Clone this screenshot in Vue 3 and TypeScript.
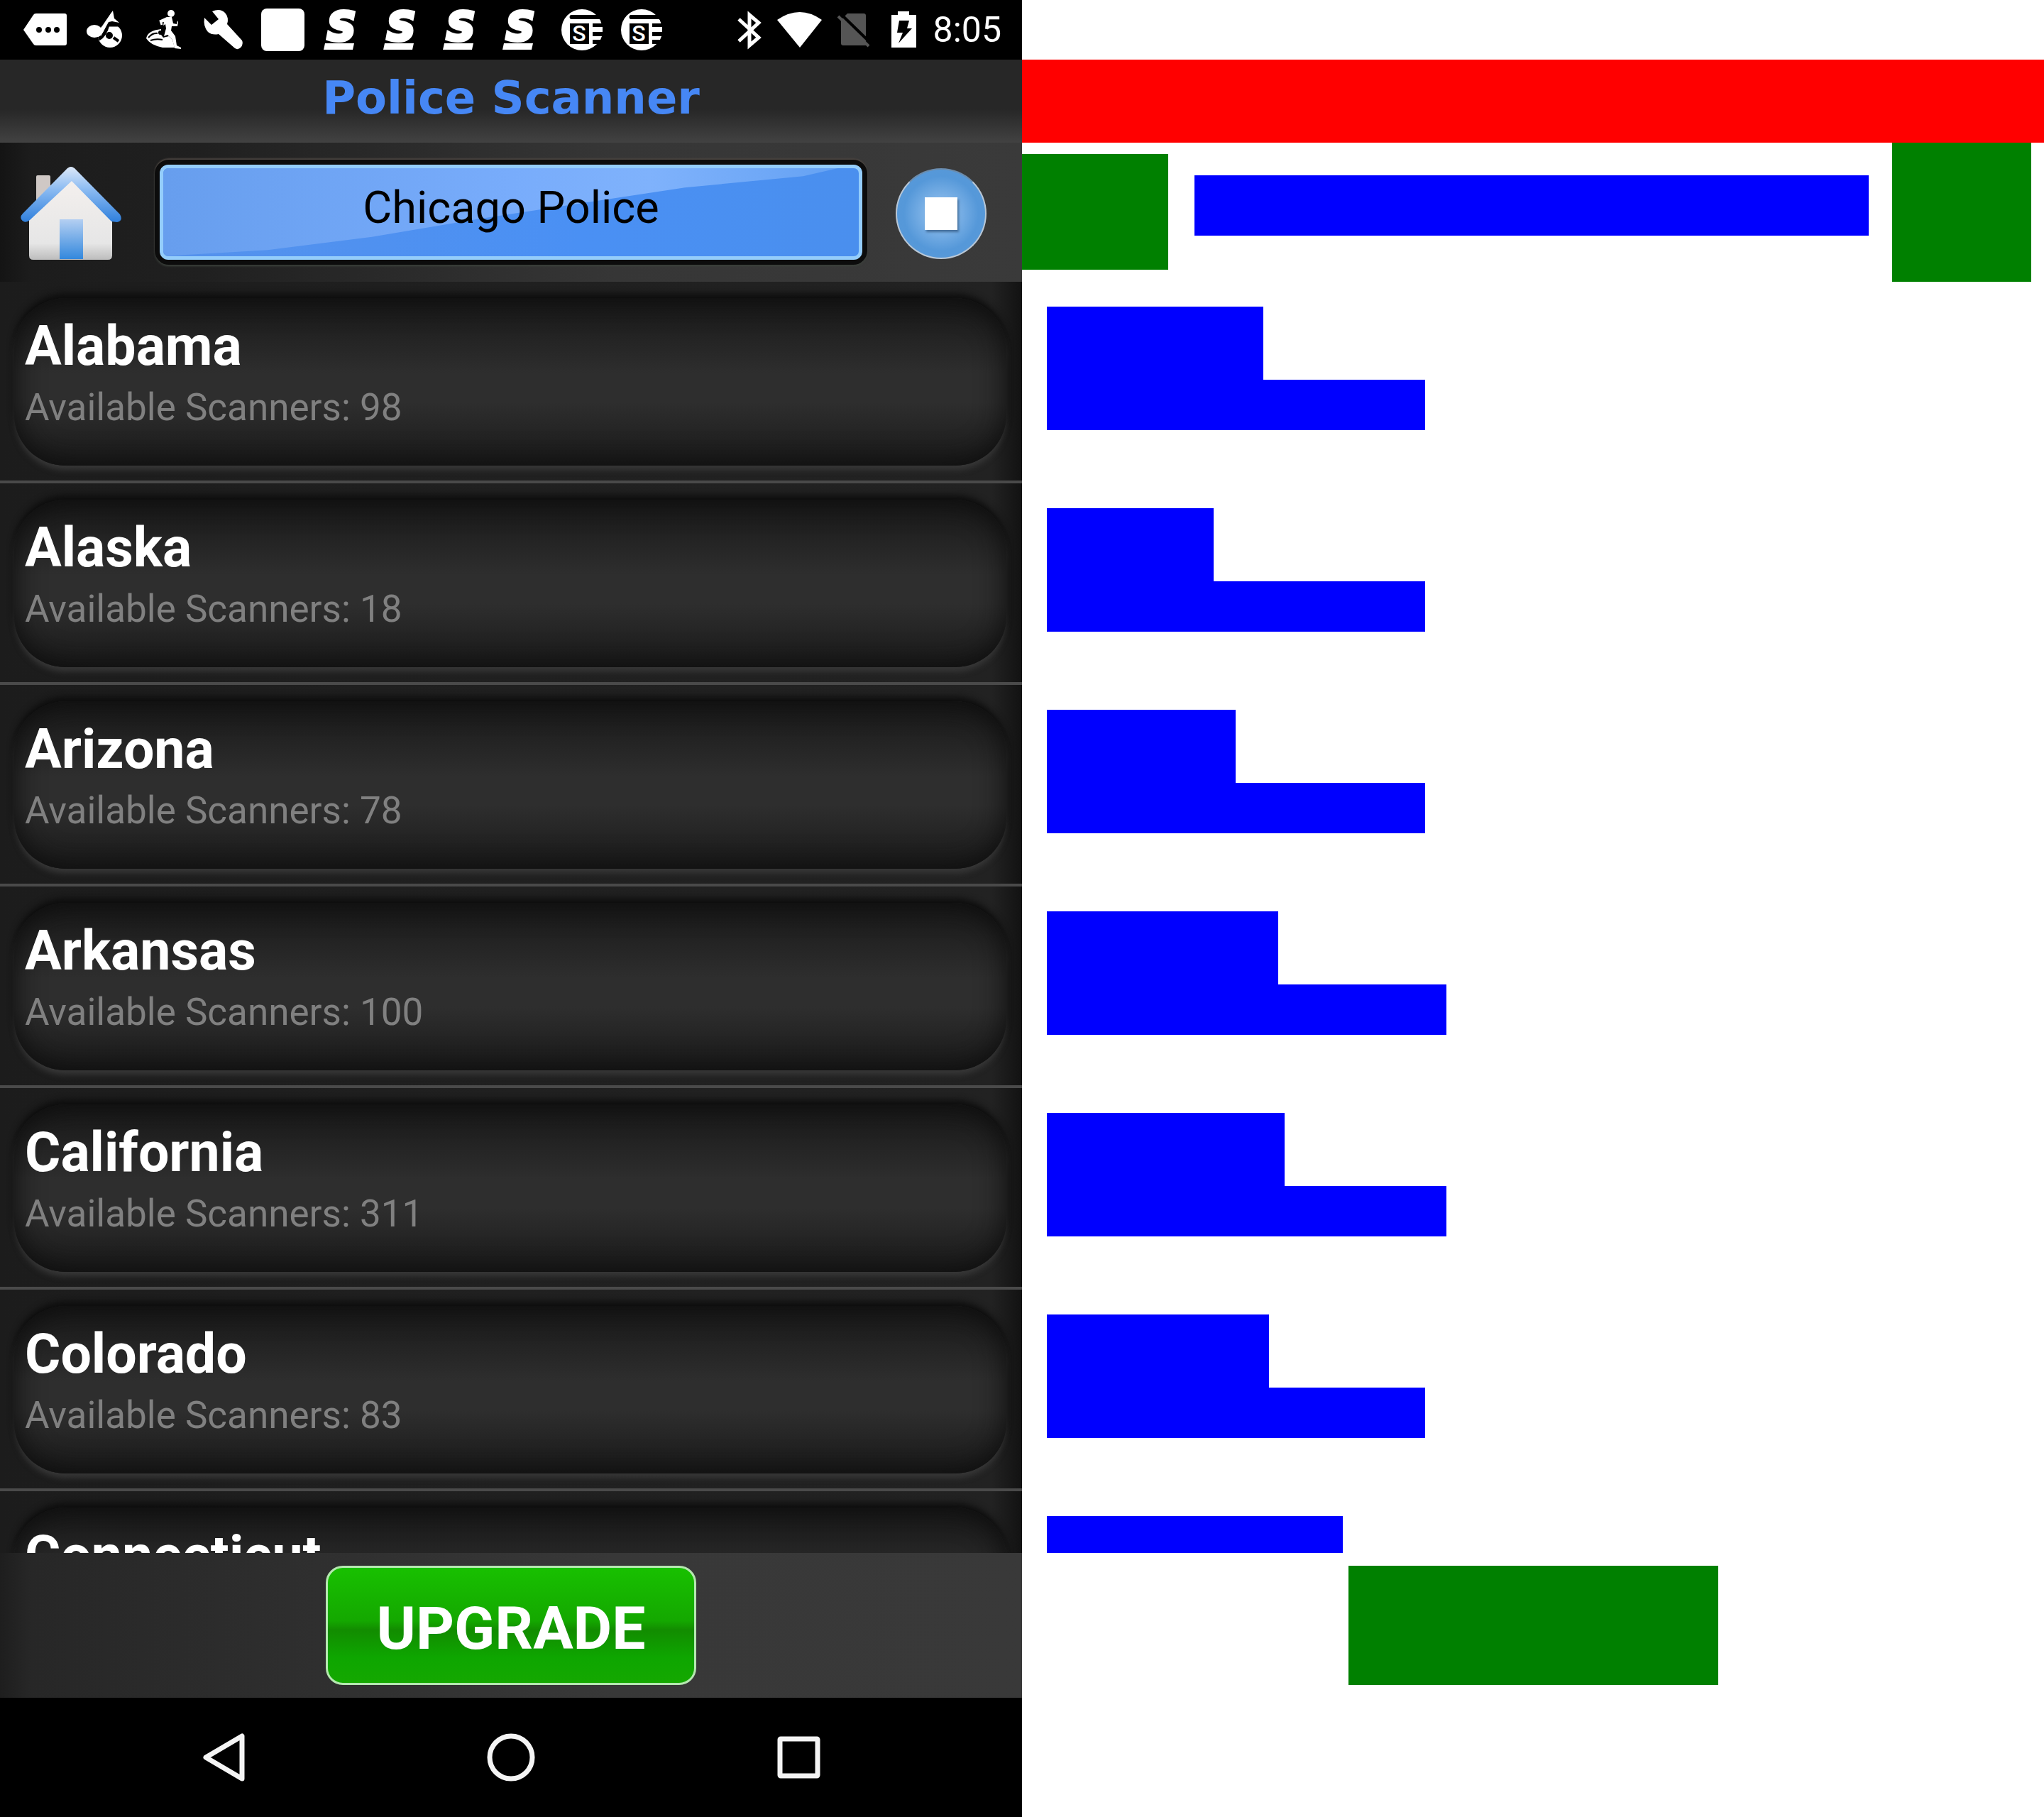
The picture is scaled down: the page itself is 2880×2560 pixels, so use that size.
<script setup lang="ts">
interface Region {
  name: string
  scanners: number
  nameWidth: number
  detailWidth: number
}

const regions: Region[] = [
  { name: 'Alabama', scanners: 98, nameWidth: 305, detailWidth: 533 },
  { name: 'Alaska', scanners: 18, nameWidth: 235, detailWidth: 533 },
  { name: 'Arizona', scanners: 78, nameWidth: 266, detailWidth: 533 },
  { name: 'Arkansas', scanners: 100, nameWidth: 326, detailWidth: 563 },
  { name: 'California', scanners: 311, nameWidth: 335, detailWidth: 563 },
  { name: 'Colorado', scanners: 83, nameWidth: 313, detailWidth: 533 },
  { name: 'Connecticut', scanners: 0, nameWidth: 417, detailWidth: 533 },
]

const sIcons = [1, 2, 3, 4]
const sfIcons = [1, 2]
</script>

<template>
  <div class="page">
    <main class="phone">
      <div class="status">
        <div class="notices">
          <svg viewBox="0 0 84 84">
            <path fill="#fff" d="M11 42 25 21Q26 19 29 19H69Q72 19 72 22V61Q72 64 69 64H29Q26 64 25 62Z" />
            <g fill="#000"><circle cx="33" cy="42" r="4" /><circle cx="46" cy="42" r="4" /><circle cx="58" cy="42" r="4" /></g>
          </svg>
          <svg viewBox="0 0 84 84">
            <circle cx="49" cy="50" r="17" fill="#fff" />
            <path d="M33 55Q42 50 46 35L64 35" fill="none" stroke="#000" stroke-width="5" />
            <ellipse cx="27" cy="44" rx="11" ry="9" fill="#fff" />
            <path d="M33 44 50 19 53 15 55 26 62 32 52 30 47 31 36 51Z" fill="#fff" />
            <circle cx="48" cy="50" r="5" fill="#000" />
            <path d="M54 53 61 58" stroke="#000" stroke-width="4" />
          </svg>
          <svg viewBox="0 0 84 84">
            <circle cx="51" cy="19" r="5" fill="#fff" />
            <path d="M45 24 52 24 54 33 59 34 60 29 61 31 60 37 52 37 51 43 57 51 59 64 65 67 65 69 56 68 53 56 46 49 41 51 44 40 43 34 40 36 41 31 37 32 34 29Z" fill="#fff" />
            <path d="M36 29 38 35" stroke="#fff" stroke-width="3" />
            <path d="M37 41Q18 43 16 54 21 63 39 67H56L53 56 48 51 40 53 37 49Z" fill="#fff" />
            <circle cx="36" cy="46" r="3" fill="#000" />
            <path d="M19 53Q25 46 32 47M22 57Q30 54 39 56" stroke="#000" stroke-width="2" fill="none" />
          </svg>
          <svg viewBox="0 0 84 84">
            <path d="M25 16Q36 11 43 18 49 25 46 34L67 57Q69 61 66 66 62 71 57 68L34 48Q25 50 19 45 12 37 14 25L24 35 34 27Z" fill="#fff" />
          </svg>
          <svg viewBox="0 0 84 84"><rect x="10" y="12" width="61" height="60" rx="8" fill="#fff" /></svg>
          <svg v-for="n in sIcons" :key="'s' + n" viewBox="0 0 84 84">
            <text x="19" y="56" class="s-glyph">S</text>
            <path d="M16 61H57L55 70H14Z" fill="#fff" />
          </svg>
          <svg v-for="n in sfIcons" :key="'f' + n" viewBox="0 0 84 84">
            <circle cx="42" cy="42" r="29" fill="#fff" />
            <path d="M26 21H64L70 27H26Q23 24 26 21ZM57 33H74V38H57ZM57 45H74V51H57ZM57 56H74L64 62H57ZM25 33H52V62H25Z" fill="#000" />
            <path d="M57 28H68V32H57ZM57 38H71V45H57ZM57 51H70L68 56H57Z" fill="#fff" />
            <text x="38" y="58" text-anchor="middle" class="sf-glyph">S</text>
          </svg>
        </div>
        <div class="system">
          <svg class="bt" viewBox="0 0 36 84">
            <path d="M2 27 30 53 17 64V21L30 32 2 58" fill="none" stroke="#fff" stroke-width="5" />
          </svg>
          <svg class="wifi" viewBox="0 0 64 84">
            <path d="M0 28Q32 6 63 28L32 67Z" fill="#fff" />
          </svg>
          <svg class="sim" viewBox="0 0 56 84">
            <path d="M12 22 15 19H38Q41 19 41 22V64H9Q6 64 6 61V28Z" fill="#555" />
            <path d="M2 23 45 65" stroke="#555" stroke-width="4" />
            <path d="M8 22 43 56" stroke="#000" stroke-width="4" />
          </svg>
          <svg class="battery" viewBox="0 0 40 84">
            <path d="M10 16H26V21H36V67H1V21H10Z" fill="#fff" />
            <path d="M12 29H26L23 40H30L11 61 17 46H9Z" fill="#000" />
          </svg>
          <time class="clock">8:05</time>
        </div>
      </div>

      <h1 class="title">Police Scanner</h1>

      <div class="toolbar">
        <button class="home" type="button" aria-label="Home">
          <svg viewBox="0 0 144 134">
            <defs>
              <linearGradient id="roof" x1="0" y1="0" x2="0" y2="1">
                <stop offset="0" stop-color="#dce8f8" /><stop offset=".4" stop-color="#8dbcf2" /><stop offset="1" stop-color="#2f7fdc" />
              </linearGradient>
              <linearGradient id="wall" x1="0" y1="0" x2="0" y2="1">
                <stop offset="0" stop-color="#f4f0ee" /><stop offset=".8" stop-color="#e6e6e6" /><stop offset="1" stop-color="#bdbdbd" />
              </linearGradient>
              <linearGradient id="door" x1="0" y1="0" x2="0" y2="1">
                <stop offset="0" stop-color="#b4cff2" /><stop offset="1" stop-color="#3388dd" />
              </linearGradient>
            </defs>
            <path d="M23 15Q23 13 25 13H41Q43 13 43 15V35L23 55Z" fill="#cfc8c5" />
            <path d="M72 16 130 72V126Q130 132 124 132H19Q13 132 13 126V72Z" fill="url(#wall)" />
            <path d="M67 3Q72-1 77 3L141 68Q146 77 137 79L129 78 73 21 14 76Q7 82 2 75 0 71 4 67Z" fill="url(#roof)" />
            <path d="M56 75H89V131H56Z" fill="url(#door)" />
          </svg>
        </button>
        <div class="playing"><span>Chicago Police</span></div>
        <button class="stop" type="button" aria-label="Stop"><span class="square"></span></button>
      </div>

      <ul class="list">
        <li v-for="region in regions" :key="region.name">
          <button class="region" type="button">
            <span class="name">{{ region.name }}</span>
            <span v-if="region.scanners" class="detail">Available Scanners: {{ region.scanners }}</span>
          </button>
        </li>
      </ul>

      <div class="promo"><button class="upgrade" type="button">UPGRADE</button></div>

      <nav class="keys">
        <button type="button" aria-label="Back">
          <svg viewBox="0 0 68 68"><path d="M9 34 60 4V64Z" /></svg>
        </button>
        <button type="button" aria-label="Home screen">
          <svg viewBox="0 0 68 68"><circle cx="34" cy="34" r="30" /></svg>
        </button>
        <button type="button" aria-label="Recent apps">
          <svg viewBox="0 0 68 68"><rect x="8" y="8" width="53" height="52" rx="1" /></svg>
        </button>
      </nav>
    </main>

    <section class="blocks" aria-label="Layout blocks">
      <div class="b-title"></div>
      <div class="b-toolbar">
        <div class="b-home"></div>
        <div class="b-playing"></div>
        <div class="b-stop"></div>
      </div>
      <div class="b-list">
        <div v-for="region in regions" :key="region.name" class="b-row">
          <div class="b-name" :style="{ width: region.nameWidth + 'px' }"></div>
          <div class="b-detail" :style="{ width: region.detailWidth + 'px' }"></div>
        </div>
      </div>
      <div class="b-promo"><div class="b-upgrade"></div></div>
    </section>
  </div>
</template>

<style>
body {
  background: #fff;
}
</style>

<style scoped>
.page {
  display: grid;
  grid-template-columns: 1fr 1fr;
  height: 100vh;
  font-family: Roboto, "Liberation Sans", sans-serif;
}
.page * {
  box-sizing: border-box;
}
button {
  border: 0;
  padding: 0;
  margin: 0;
  background: none;
  font-family: inherit;
  color: inherit;
}
svg {
  display: block;
}
.phone,
.blocks {
  display: flex;
  flex-direction: column;
  min-width: 0;
  height: 100vh;
  overflow: hidden;
}
.phone {
  background: #000;
}

.status {
  flex: none;
  display: flex;
  justify-content: space-between;
  height: 84px;
  padding: 0 29px 0 22px;
}
.notices {
  display: flex;
}
.notices svg {
  width: 84px;
  height: 84px;
}
.s-glyph {
  font: italic bold 56px "DejaVu Sans", sans-serif;
  fill: #fff;
  stroke: #fff;
  stroke-width: 5px;
}
.sf-glyph {
  font: 500 32px Roboto, sans-serif;
  fill: #fff;
}
.system {
  display: flex;
  align-items: center;
  gap: 20px;
}
.system svg {
  height: 84px;
}
.bt {
  width: 36px;
}
.wifi {
  width: 64px;
}
.sim {
  width: 56px;
}
.battery {
  width: 40px;
}
.clock {
  color: #fff;
  font-size: 50px;
  line-height: 92px;
}

.title {
  flex: none;
  height: 117px;
  margin: 0;
  background: linear-gradient(#272727 60%, #424242);
  color: #4687f5;
  font: bold 64px/108px "DejaVu Sans", sans-serif;
  text-align: center;
}

.toolbar {
  flex: none;
  display: flex;
  align-items: center;
  height: 196px;
  padding: 4px 50px 0 28px;
  background: linear-gradient(90deg, #141414, #1c1c1c 3%, #202020 20%, #363636 60%, #3a3a3a);
}
.home {
  width: 144px;
}
.playing {
  flex: 1;
  position: relative;
  height: 148px;
  margin: 0 40px 4px 46px;
  border: 7px solid #0c0c0c;
  border-radius: 20px;
  background: #000;
  box-shadow: 0 -2px 2px #4a4440, 0 2px 3px #3c423c;
}
.playing::before {
  content: "";
  position: absolute;
  inset: 0;
  border: 5px solid #94cdfb;
  border-radius: 12px;
  background: linear-gradient(90deg, #5592ec, #4a90f4 60%, #4a8fee);
}
.playing::after {
  content: "";
  position: absolute;
  inset: 5px;
  border-radius: 8px;
  background: linear-gradient(90deg, #679eee, #78acfb 50%, #7fb2fc 70%, #62a0f2);
  clip-path: polygon(0 0, 97% 0, 92% 9%, 75% 22%, 60% 40%, 45% 58%, 30% 78%, 15% 93%, 0 100%);
}
.playing span {
  position: relative;
  z-index: 1;
  display: block;
  color: #000;
  font-size: 63px;
  line-height: 122px;
  text-align: center;
}
.stop {
  display: flex;
  align-items: center;
  justify-content: center;
  width: 128px;
  height: 128px;
  border: 2px solid #b9c7d6;
  border-top-color: #6b8cad;
  border-radius: 50%;
  background: radial-gradient(#86b8ea 20%, #5598d9 60%, #5a9ad8);
}
.square {
  width: 46px;
  height: 46px;
  background: #fff;
  box-shadow: 2px 3px 3px #46709c;
}

.list {
  flex: 1;
  min-height: 0;
  margin: 0;
  padding: 0;
  overflow: hidden;
  list-style: none;
}
li {
  padding: 23px 22px 21px 20px;
  border-bottom: 4px solid #4a4a4a;
  background: linear-gradient(90deg, #1c1c1c, #202020 50%, #222 97%, #121212);
}
.region {
  display: flex;
  flex-direction: column;
  width: 100%;
  height: 236px;
  padding: 18px 15px 46px;
  border-radius: 72px;
  background: linear-gradient(#181818, #2e2e2e 45%, #2e2e2e 62%, #1a1a1a);
  box-shadow: inset 0 0 40px #0c0c0c, 0 8px 8px -2px #383838, 0 -6px 10px #0d0d0d;
  text-align: left;
}
.name {
  color: #fff;
  font-size: 77px;
  font-weight: bold;
  line-height: 100px;
}
.detail {
  color: #808080;
  font-size: 53px;
  line-height: 72px;
}

.promo {
  flex: none;
  height: 204px;
  padding-top: 18px;
  background: linear-gradient(90deg, #1e1e1e, #272727 3%, #2d2d2d 25%, #383838 60%, #393939);
}
.upgrade {
  display: block;
  width: 522px;
  height: 168px;
  margin: 0 auto;
  padding-top: 8px;
  border: 3px solid #b5e8b0;
  border-radius: 24px;
  background: linear-gradient(#18c000, #14a800 46%, #128c00 54%, #0ea600 78%, #14a800);
  color: #fff;
  font-size: 84px;
  font-weight: bold;
}

.keys {
  flex: none;
  display: flex;
  align-items: center;
  justify-content: center;
  gap: 337px;
  height: 168px;
}
.keys svg {
  width: 68px;
  height: 68px;
  fill: none;
  stroke: #f4f4f4;
  stroke-width: 7px;
  stroke-linejoin: round;
}

.blocks {
  background: #fff;
}
.b-title {
  flex: none;
  height: 117px;
  margin-top: 84px;
  background: #f00;
}
.b-toolbar {
  flex: none;
  display: flex;
  align-items: flex-start;
  height: 196px;
  padding-right: 18px;
}
.b-home {
  width: 206px;
  height: 163px;
  margin-top: 16px;
  background: #008000;
}
.b-playing {
  flex: 1;
  height: 85px;
  margin: 46px 33px 0 37px;
  background: #00f;
}
.b-stop {
  width: 196px;
  height: 196px;
  background: #008000;
}
.b-list {
  flex: 1;
  min-height: 0;
  overflow: hidden;
}
.b-row {
  height: 284px;
  padding: 35px 0 0 35px;
}
.b-name {
  height: 103px;
  background: #00f;
}
.b-detail {
  height: 71px;
  background: #00f;
}
.b-promo {
  flex: none;
  height: 372px;
  padding-top: 18px;
}
.b-upgrade {
  width: 521px;
  height: 168px;
  margin: 0 auto;
  background: #008000;
}
</style>
